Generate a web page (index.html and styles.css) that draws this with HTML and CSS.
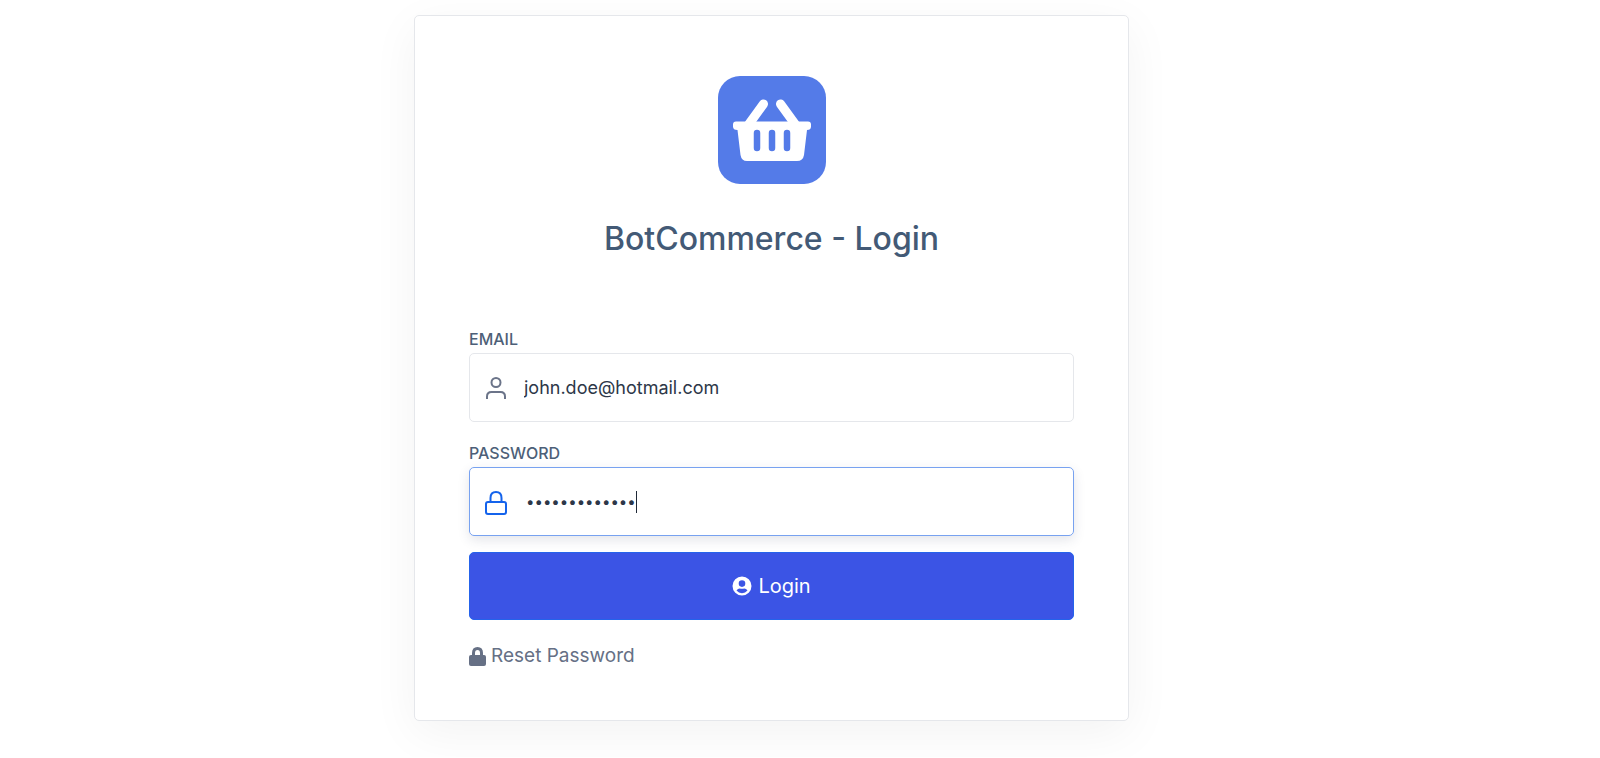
FILE: index.html
```html
<!DOCTYPE html>
<html lang="en">
<head>
<meta charset="utf-8">
<meta name="viewport" content="width=device-width, initial-scale=1">
<title>BotCommerce - Login</title>
<link rel="stylesheet" href="styles.css">
</head>
<body>
<main class="card">
  <svg class="logo" viewBox="0 0 108 108" aria-hidden="true">
    <rect width="108" height="108" rx="22" fill="#547be8"/>
    <path d="M45.500 28 31 48M62.500 28 77 48" fill="none" stroke="#fff" stroke-width="9" stroke-linecap="round"/>
    <path fill="#fff" d="M18 45.500H90Q93 45.500 93 48.500V50.500Q93 54 89 54L86 79Q85 85 79 85H29Q23.500 85 22.500 79L19.500 54Q15 54 15 50.500V48.500Q15 45.500 18 45.500Z"/>
    <path d="M39 57V72M54 57V72M69 57V72" stroke="#547be8" stroke-width="6.500" stroke-linecap="round"/>
  </svg>
  <h1 class="title">BotCommerce - Login</h1>
  <form class="form">
    <label class="label" for="email">EMAIL</label>
    <div class="field">
      <svg class="field-icon" viewBox="0 0 24 24" aria-hidden="true">
        <circle cx="12" cy="6.500" r="4.500"/>
        <path d="M3 23V20.500Q3 16 7.500 16H16.500Q21 16 21 20.500V23"/>
      </svg>
      <input class="input" id="email" type="email" value="john.doe@hotmail.com">
    </div>
    <label class="label" for="password">PASSWORD</label>
    <div class="field field-active">
      <svg class="field-icon" viewBox="0 0 24 24" aria-hidden="true">
        <rect x="2" y="12" width="20" height="12" rx="2"/>
        <path d="M6.500 12V8Q6.500 2 12 2T17.500 8V12"/>
      </svg>
      <input class="input input-password" id="password" type="password" value="botcommerce24">
      <span class="caret"></span>
    </div>
    <button class="button" type="button">
      <svg class="button-icon" viewBox="0 0 20 20" aria-hidden="true">
        <path fill="currentColor" fill-rule="evenodd" d="M10 0.500a9.500 9.500 0 1 0 0 19a9.500 9.500 0 1 0 0-19ZM10 4.300a3.300 3.300 0 1 1 0 6.600a3.300 3.300 0 1 1 0-6.600ZM4.500 14.600Q5.800 12.400 7.800 12.400Q10 13.200 12.200 12.400Q14.200 12.400 15.500 14.600Q13.300 17.200 10 17.200T4.500 14.600Z"/>
      </svg>
      Login
    </button>
  </form>
  <a class="reset" href="#">
    <svg class="reset-icon" viewBox="0 0 17 19" aria-hidden="true">
      <path d="M4.500 9V6Q4.500 1.500 8.500 1.500T12.500 6V9" fill="none" stroke="currentColor" stroke-width="3"/>
      <rect y="8" width="17" height="11" rx="2" fill="currentColor"/>
    </svg>
    Reset Password
  </a>
</main>
</body>
</html>
```
FILE: styles.css
```css
* {
  box-sizing: border-box;
}

body {
  margin: 0;
  padding: 15px 57px 36px 0;
  background: #fff;
  color: #2d3748;
  font-family: Inter, "Liberation Sans", sans-serif;
}

.card {
  display: flex;
  flex-direction: column;
  max-width: 715px;
  margin: 0 auto;
  padding: 60px 54px 50px;
  border: 1px solid #e5e7eb;
  border-radius: 5px;
  background: #fff;
  box-shadow: 0 12px 48px rgba(0, 0, 0, 0.05);
}

.logo {
  width: 108px;
  height: 108px;
  align-self: center;
}

.title {
  margin: 33px 0 66px;
  color: #435a76;
  font-size: 32px;
  font-weight: 500;
  line-height: 44px;
  text-align: center;
}

.form {
  display: flex;
  flex-direction: column;
}

.label {
  padding-bottom: 2px;
  color: #4d5f78;
  font-size: 16px;
  font-weight: 500;
  line-height: 24px;
}

.field {
  position: relative;
  display: flex;
  align-items: center;
  gap: 16px;
  margin-bottom: 19px;
  padding: 0 14px;
  border: 1px solid #e5e7eb;
  border-radius: 5px;
  color: #6b7489;
}

.field-active {
  margin-bottom: 16px;
  border-color: #78a2f0;
  color: #1463ec;
  box-shadow: 0 4px 12px rgba(45, 55, 90, 0.13);
}

.field-icon {
  flex: none;
  width: 24px;
  height: 24px;
  overflow: visible;
  fill: none;
  stroke: currentColor;
  stroke-width: 2;
}

.input {
  flex: 1;
  min-width: 0;
  height: 67px;
  padding: 0;
  border: 0;
  outline: 0;
  background: transparent;
  color: #2d3748;
  font: 18px Inter, "Liberation Sans", sans-serif;
}

.input-password {
  padding-left: 2px;
  font-size: 15px;
}

.caret {
  position: absolute;
  top: 23px;
  left: 166px;
  width: 1px;
  height: 22px;
  background: #1f2937;
}

.button {
  display: flex;
  align-items: center;
  justify-content: center;
  gap: 6px;
  height: 68px;
  border: 1px solid #2563eb;
  border-radius: 5px;
  background: #3b54e5;
  color: #fff;
  font: 20px Inter, "Liberation Sans", sans-serif;
}

.button-icon {
  width: 20px;
  height: 20px;
}

.reset {
  display: flex;
  align-items: center;
  align-self: flex-start;
  gap: 5px;
  margin-top: 22px;
  color: #667085;
  font-size: 19px;
  line-height: 28px;
  text-decoration: none;
}

.reset-icon {
  width: 17px;
  height: 19px;
}
```
